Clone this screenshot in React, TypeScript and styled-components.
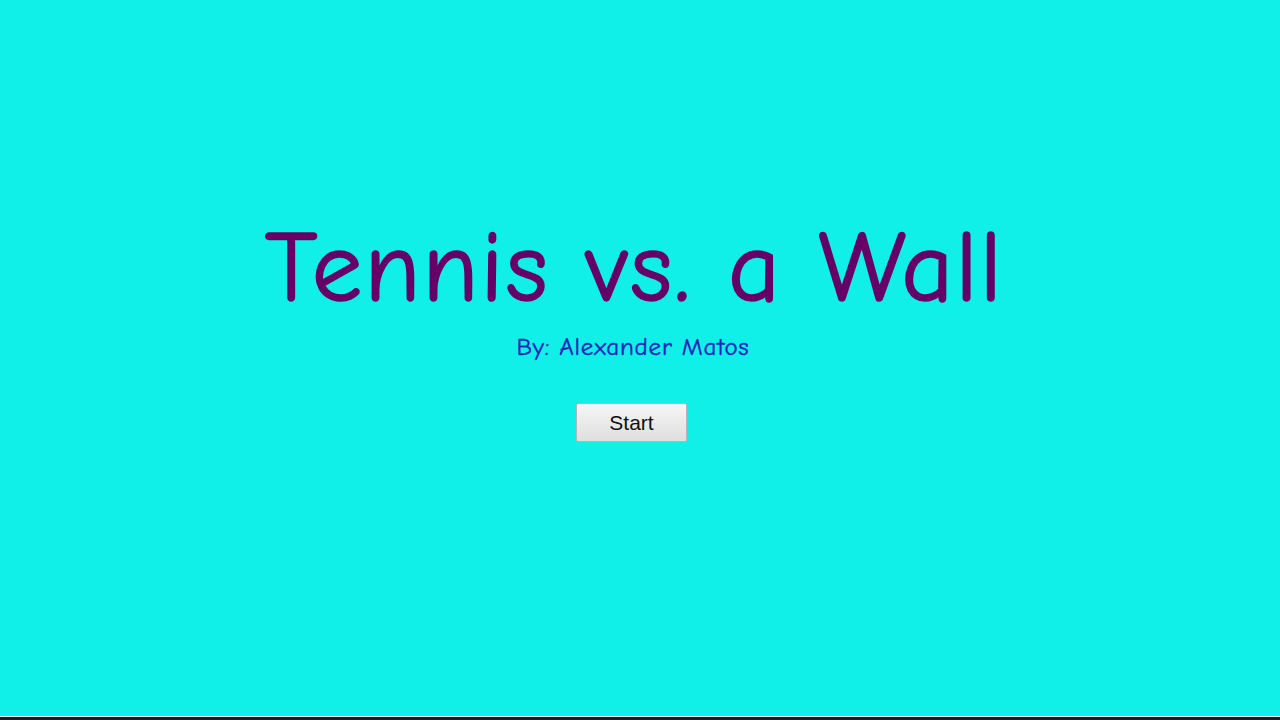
import React from 'react';
import styled, {createGlobalStyle} from 'styled-components';

const GlobalStyle = createGlobalStyle`
  html, body {
    margin: 0;
    padding: 0;
    background: #10f0e8;
  }
`;

export default function App() {
  return (
    <>
      <GlobalStyle/>
      <Page>
        <Title>Tennis vs. a Wall</Title>
        <Byline>By: Alexander Matos</Byline>
        <StartButton type="button">Start</StartButton>
      </Page>
      <BottomEdge/>
    </>
  );
}

const Page = styled.main`
  height: 716px;
  box-sizing: border-box;
  padding: 208px 17px 0 0;
  display: flex;
  flex-direction: column;
  align-items: center;
  background: #10f0e8;
  font-family: "Comic Sans MS", "Comic Neue", Lato, sans-serif;
`;

const Title = styled.h1`
  margin: 0;
  padding-left: 6px;
  font-size: 101px;
  line-height: 121px;
  font-weight: 400;
  color: #660066;
  letter-spacing: 2.2px;
  -webkit-text-stroke: 1.6px #660066;
`;

const Byline = styled.p`
  margin: 3px 0 0;
  padding-left: 3px;
  font-size: 25px;
  line-height: 30px;
  font-weight: 400;
  color: #2323b8;
  letter-spacing: 0.8px;
  -webkit-text-stroke: 0.4px #2323b8;
`;

const StartButton = styled.button`
  margin-top: 41px;
  width: 111px;
  height: 39px;
  font-family: "Liberation Sans", Arial, sans-serif;
  font-size: 21px;
  color: #111;
  background: linear-gradient(#f6f6f6, #dedede);
  border: 1px solid #b5b5b5;
  border-radius: 2px;
  cursor: pointer;
`;

const BottomEdge = styled.div`
  height: 4px;
  background: #1f1f1f;
  border-top: 1px solid #e8f8f8;
  box-sizing: border-box;
`;
